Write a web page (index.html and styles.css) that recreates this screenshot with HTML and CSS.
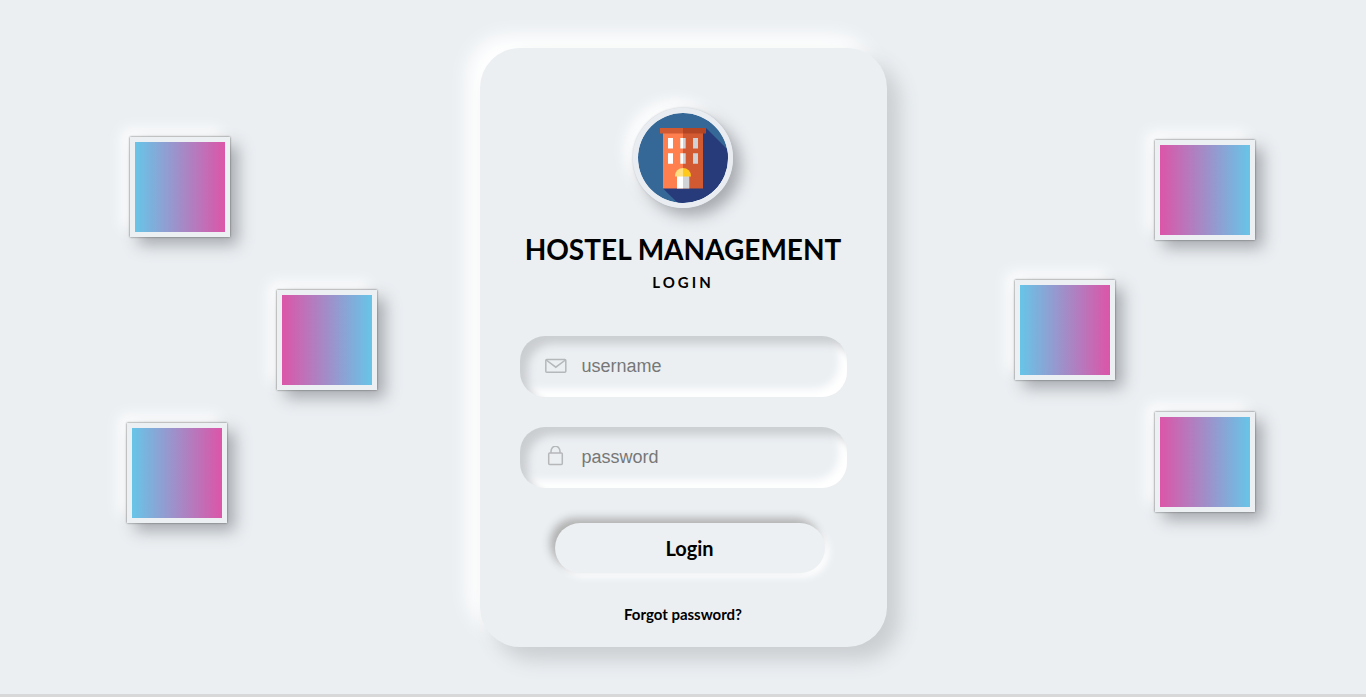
FILE: index.html
```html
<!DOCTYPE html>
<html lang="en">
<head>
<meta charset="utf-8">
<meta name="viewport" content="width=device-width, initial-scale=1">
<title>Hostel Management</title>
<link rel="stylesheet" href="styles.css">
</head>
<body>
<div class="page">
  <div class="decor decor-left" aria-hidden="true">
    <div class="tile tile-blue-pink"></div>
    <div class="tile tile-pink-blue tile-inner"></div>
    <div class="tile tile-blue-pink"></div>
  </div>
  <main class="card">
    <svg class="logo" viewBox="5 5 90 90" role="img" aria-label="Hostel building">
      <defs><clipPath id="disc"><circle cx="50" cy="50" r="45"/></clipPath></defs>
      <g clip-path="url(#disc)">
        <rect width="100" height="100" fill="#356797"/>
        <path d="M73 20L103 50V100H50L30 80.500Z" fill="#273a7a"/>
        <rect x="30" y="25" width="20" height="55.500" fill="#ff7f4f"/>
        <rect x="50" y="25" width="20" height="55.500" fill="#d25a32"/>
        <rect x="27" y="20" width="23" height="5.500" fill="#d25a32"/>
        <rect x="50" y="20" width="23" height="5.500" fill="#b44524"/>
        <path d="M35 30h5v10.500h-5zM47.300 30H50v10.500h-2.700zM35 45.300h5v10.500h-5zM47.300 45.300H50v10.500h-2.700zM44 68h6v12.500h-6z" fill="#fff"/>
        <path d="M50 30h2.700v10.500H50zM60 30h5v10.500h-5zM50 45.300h2.700v10.500H50zM60 45.300h5v10.500h-5zM50 68h6.300v12.500H50z" fill="#d0d2d5"/>
        <path d="M42 68a8 8 0 0 1 8-8v8.500h-8z" fill="#ffdf80"/>
        <path d="M50 60a8 8 0 0 1 8 8v.5h-8z" fill="#ffc91b"/>
      </g>
    </svg>
    <h1 class="title">HOSTEL MANAGEMENT</h1>
    <p class="subtitle">LOGIN</p>
    <form class="form">
      <label class="field">
        <svg class="field-icon" viewBox="0 1 22 22" aria-hidden="true"><rect x=".8" y="5.500" width="20" height="12.800" rx="1"/><path d="M1.200 6L10.800 13.200l9.600-7.200"/></svg>
        <input class="field-input" type="text" placeholder="username" aria-label="username">
      </label>
      <label class="field">
        <svg class="field-icon" viewBox="0 1 22 22" aria-hidden="true"><rect x="3.700" y="8" width="13.600" height="11.500" rx="1"/><path d="M6 8V6.500a4.500 5.300 0 0 1 9 0V8"/></svg>
        <input class="field-input" type="password" placeholder="password" aria-label="password">
      </label>
      <button class="submit" type="button">Login</button>
    </form>
    <a class="forgot" href="#">Forgot password?</a>
  </main>
  <div class="decor decor-right" aria-hidden="true">
    <div class="tile tile-pink-blue"></div>
    <div class="tile tile-blue-pink tile-inner"></div>
    <div class="tile tile-pink-blue"></div>
  </div>
</div>
</body>
</html>
```

FILE: styles.css
```css
* {
  box-sizing: border-box;
}

body {
  margin: 0;
  background: #ebeff2;
  color: #000;
  font-family: Lato, sans-serif;
}

.page {
  display: grid;
  grid-template-columns: 1fr 407px 1fr;
  align-items: center;
  min-height: 100vh;
  border-bottom: 3px solid #d8d8d8;
}

.decor {
  display: flex;
  flex-direction: column;
}

.decor-left {
  align-items: flex-start;
  padding: 0 0 34px 127px;
}

.decor-left .tile-inner {
  margin: 53px 0 33px 150px;
}

.decor-left .tile:first-child {
  margin-left: 3px;
}

.decor-right {
  align-items: flex-end;
  padding: 0 111px 42px 0;
}

.decor-right .tile-inner {
  margin: 40px 140px 32px 0;
}

.tile {
  flex: none;
  width: 100px;
  height: 100px;
  border: 5px solid #ecf0f3;
  box-shadow: 0 0 2px #5f5f5f, 8px 8px 15px #a7aaaf, -8px -8px 15px #fff;
}

.tile-blue-pink {
  background: linear-gradient(to right, #67c5e8, #dc55a8);
}

.tile-pink-blue {
  background: linear-gradient(to left, #67c5e8, #dc55a8);
}

.card {
  display: flex;
  flex-direction: column;
  align-items: center;
  padding: 60px 40px 24px;
  border-radius: 40px;
  background: #ebeff2;
  box-shadow: 13px 13px 20px #cbced1, -13px -13px 20px #fff;
}

.logo {
  width: 100px;
  height: 100px;
  border: 5px solid #e9edf2;
  border-radius: 50%;
  box-shadow: 0 0 2px #b5bcc4, 8px 8px 15px #a7aaaf, -8px -8px 15px #fff;
}

.title {
  margin: 23px 0 0;
  font-size: 28px;
  line-height: 36px;
  font-weight: 700;
  white-space: nowrap;
}

.subtitle {
  margin: 6px 0 0;
  font-size: 15px;
  line-height: 18px;
  font-weight: 700;
  letter-spacing: 3px;
}

.form {
  display: flex;
  flex-direction: column;
  gap: 30px;
  width: 100%;
  padding-top: 45px;
}

.field {
  display: flex;
  align-items: center;
  gap: 15px;
  height: 61px;
  padding: 0 25px;
  border-radius: 25px;
  box-shadow: inset 8px 8px 8px #cbced1, inset -8px -8px 8px #fff;
}

.field-icon {
  flex: none;
  width: 22px;
  height: 22px;
  fill: none;
  stroke: #b5b7b9;
  stroke-width: 1.500;
}

.field-input {
  flex: 1;
  min-width: 0;
  padding: 0;
  border: 0;
  outline: 0;
  background: transparent;
  color: #555;
  font: 18px "Liberation Sans", Arial, sans-serif;
}

.field-input::placeholder {
  color: #777;
}

.submit {
  height: 50px;
  margin: 5px 22px 0 35px;
  border: 0;
  border-radius: 30px;
  background: #ecf0f3;
  color: #000;
  font: 700 20px Lato, sans-serif;
  box-shadow: -5px -5px 8px #b1b1b1, 4px 4px 8px #fff;
}

.forgot {
  margin-top: 32px;
  color: #000;
  font-size: 15px;
  line-height: 18px;
  font-weight: 700;
  text-decoration: none;
}
```
